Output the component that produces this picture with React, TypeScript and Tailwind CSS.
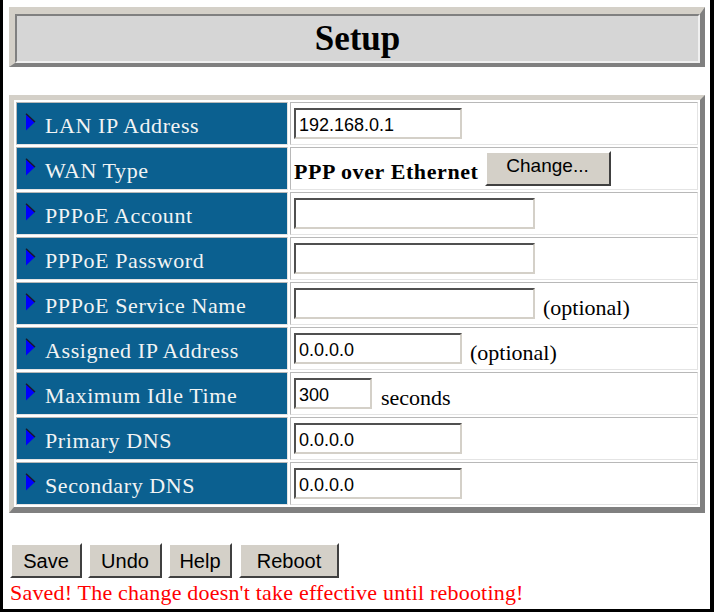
import React from "react";

const Arrow = () => (
  <svg width="11" height="18" viewBox="0 0 11 18" className="self-start mt-[10px] shrink-0">
    <polygon points="1,1 10,9 1,17.5" fill="#0000ff" />
    <line x1="1" y1="0.7" x2="10" y2="9" stroke="#1a1a2a" strokeWidth="1.5" />
  </svg>
);

const serif = "font-['Liberation_Serif','Times_New_Roman',serif]";
const sans = "font-['Liberation_Sans',Arial,sans-serif]";

const inputCls = `h-[31px] border-2 border-t-[#505050] border-l-[#505050] border-b-[#d4d0c8] border-r-[#d4d0c8] bg-white pl-[3px] pt-[4px] text-[18px] text-black outline-none ${sans}`;

const sideText = `ml-[8px] mt-[8px] text-[22px] text-black ${serif}`;

function Row({ label, children }: { label: string; children: React.ReactNode }) {
  return (
    <>
      <div className="h-[43px] bg-[#0b6090] border border-t-[#b8b8b8] border-l-[#b8b8b8] border-b-[#e4e4e4] border-r-[#e4e4e4] flex items-center pl-[8px]">
        <Arrow />
        <span className={`ml-[9px] mt-[3px] text-[22px] tracking-[0.6px] text-[#f2f4f4] whitespace-nowrap ${serif}`}>
          {label}
        </span>
      </div>
      <div className="h-[43px] bg-white border border-t-[#b8b8b8] border-l-[#b8b8b8] border-b-[#e4e4e4] border-r-[#e4e4e4] flex items-center pl-[3px]">
        {children}
      </div>
    </>
  );
}

export default function App() {
  const btn = `h-[35px] bg-[#d4d0c8] border-2 border-t-white border-l-white border-b-[#404040] border-r-[#404040] flex items-center justify-center text-[20px] text-black ${sans}`;
  return (
    <div className={`w-[714px] h-[612px] bg-white border-l-[3px] border-r-[4px] border-b-[3px] border-black overflow-hidden ${serif}`}>
      {/* Title */}
      <div className="ml-[6px] mt-[7px] w-[696px] border-t-[7px] border-l-[6px] border-r-[5px] border-b-[4px] border-t-[#d4d0c8] border-l-[#d4d0c8] border-r-[#808080] border-b-[#808080]">
        <div className="h-[49px] bg-[#d6d6d6] border-2 border-t-[#808080] border-l-[#808080] border-b-[#f0f0f0] border-r-[#f0f0f0] flex items-center justify-center">
          <span className={`text-[35px] font-bold text-black leading-none ${serif}`}>Setup</span>
        </div>
      </div>

      {/* Main table */}
      <div className="ml-[6px] mt-[28px] w-[696px] border-t-[5px] border-l-[5px] border-r-[5px] border-b-[6px] border-t-[#d4d0c8] border-l-[#d4d0c8] border-r-[#808080] border-b-[#808080] bg-white">
        <div className="grid grid-cols-[272px_408px] gap-[2px] p-[2px]">
          <Row label="LAN IP Address">
            <input className={`${inputCls} w-[168px]`} defaultValue="192.168.0.1" />
          </Row>
          <Row label="WAN Type">
            <span className={`mt-[6px] text-[22px] font-bold tracking-[0.6px] text-black whitespace-nowrap ${serif}`}>
              PPP over Ethernet
            </span>
            <button className={`ml-[6px] w-[126px] h-[35px] bg-[#d4d0c8] border-2 border-t-white border-l-white border-b-[#404040] border-r-[#404040] flex items-start justify-center pt-[3px] text-[19px] leading-[20px] text-black ${sans}`}>
              Change...
            </button>
          </Row>
          <Row label="PPPoE Account">
            <input className={`${inputCls} w-[241px]`} defaultValue="" />
          </Row>
          <Row label="PPPoE Password">
            <input className={`${inputCls} w-[241px]`} type="password" defaultValue="" />
          </Row>
          <Row label="PPPoE Service Name">
            <input className={`${inputCls} w-[241px]`} defaultValue="" />
            <span className={sideText}>(optional)</span>
          </Row>
          <Row label="Assigned IP Address">
            <input className={`${inputCls} w-[168px]`} defaultValue="0.0.0.0" />
            <span className={sideText}>(optional)</span>
          </Row>
          <Row label="Maximum Idle Time">
            <input className={`${inputCls} w-[78px]`} defaultValue="300" />
            <span className={`${sideText} ml-[9px]`}>seconds</span>
          </Row>
          <Row label="Primary DNS">
            <input className={`${inputCls} w-[168px]`} defaultValue="0.0.0.0" />
          </Row>
          <Row label="Secondary DNS">
            <input className={`${inputCls} w-[168px]`} defaultValue="0.0.0.0" />
          </Row>
        </div>
      </div>

      {/* Buttons */}
      <div className="ml-[7px] mt-[30px] flex">
        <button className={`${btn} w-[72px]`}>Save</button>
        <button className={`${btn} w-[74px] ml-[6px]`}>Undo</button>
        <button className={`${btn} w-[64px] ml-[6px]`}>Help</button>
        <button className={`${btn} w-[100px] ml-[7px]`}>Reboot</button>
      </div>
      <div className={`ml-[7px] mt-[2px] text-[22px] leading-[25px] tracking-[0.2px] text-[#ff0000] whitespace-nowrap ${serif}`}>
        Saved! The change doesn't take effective until rebooting!
      </div>
    </div>
  );
}
